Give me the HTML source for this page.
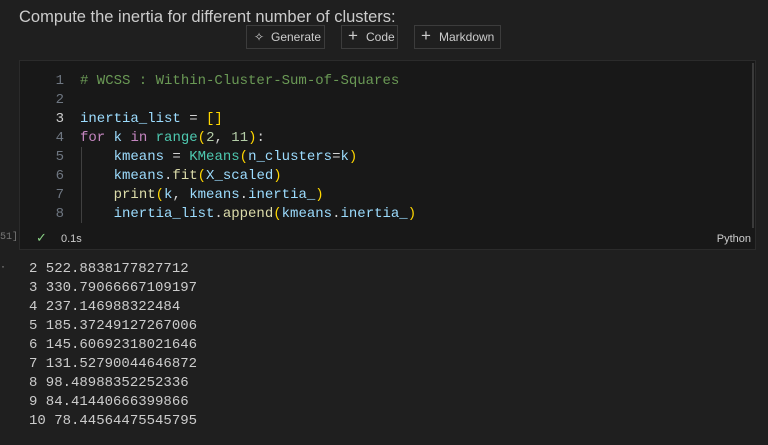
<!DOCTYPE html>
<html><head><meta charset="utf-8"><style>
html,body{margin:0;padding:0;background:#1f1f1f;width:768px;height:445px;overflow:hidden;position:relative;font-family:"Liberation Sans",sans-serif}
.title{position:absolute;left:19px;top:8px;font-size:16.5px;color:#cccccc;white-space:nowrap}
.btn{position:absolute;top:25px;height:22px;border:1px solid #3c3c3c;color:#cccccc;font-size:12px;line-height:22px;box-sizing:content-box;background:#1f1f1f;white-space:nowrap}
.cell{position:absolute;left:19px;top:60px;width:735px;height:188px;background:#181818;border:1px solid #2b2b2b}
.mono{font-family:"Liberation Mono",monospace;font-size:14px}
.ln{position:absolute;width:44px;text-align:right;color:#6e7681}
.tx{position:absolute;left:60px;white-space:pre;color:#9cdcfe}
.c{color:#6a9955}.k{color:#c586c0}.t{color:#4ec9b0}.f{color:#dcdcaa}.n{color:#b5cea8}.y{color:#ffd700}.p{color:#da70d6}.w{color:#d4d4d4}
.out{position:absolute;left:29px;top:260px;color:#cccccc;white-space:pre;line-height:19px}
</style></head><body>
<div class="title">Compute the inertia for different number of clusters:</div>
<div class="btn" style="left:246px;width:77px"><span style="position:absolute;left:7px;top:0;font-size:12px">✧</span><span style="position:absolute;left:24px">Generate</span></div>
<div class="btn" style="left:341px;width:55px"><span style="position:absolute;left:6px;font-size:17px;top:-1px">+</span><span style="position:absolute;left:24px">Code</span></div>
<div class="btn" style="left:414px;width:85px"><span style="position:absolute;left:6px;font-size:17px;top:-1px">+</span><span style="position:absolute;left:24px">Markdown</span></div>
<div class="cell mono">
<div style="position:absolute;left:61px;top:86px;width:1px;height:76px;background:#404040"></div>
<div style="position:absolute;right:1px;top:2px;width:2px;height:165px;background:#3a3a3a"></div>
<div class="ln" style="top:12px">1</div><div class="tx" style="top:12px"><span class="c"># WCSS : Within-Cluster-Sum-of-Squares</span></div>
<div class="ln" style="top:31px">2</div>
<div class="ln" style="top:50px;color:#cccccc">3</div><div class="tx" style="top:50px">inertia_list <span class="w">=</span> <span class="y">[]</span></div>
<div class="ln" style="top:69px">4</div><div class="tx" style="top:69px"><span class="k">for</span> k <span class="k">in</span> <span class="t">range</span><span class="y">(</span><span class="n">2</span><span class="w">, </span><span class="n">11</span><span class="y">)</span><span class="w">:</span></div>
<div class="ln" style="top:88px">5</div><div class="tx" style="top:88px">    kmeans <span class="w">=</span> <span class="t">KMeans</span><span class="y">(</span>n_clusters<span class="w">=</span>k<span class="y">)</span></div>
<div class="ln" style="top:107px">6</div><div class="tx" style="top:107px">    kmeans<span class="w">.</span><span class="f">fit</span><span class="y">(</span>X_scaled<span class="y">)</span></div>
<div class="ln" style="top:126px">7</div><div class="tx" style="top:126px">    <span class="f">print</span><span class="y">(</span>k<span class="w">, </span>kmeans<span class="w">.</span>inertia_<span class="y">)</span></div>
<div class="ln" style="top:145px">8</div><div class="tx" style="top:145px">    inertia_list<span class="w">.</span><span class="f">append</span><span class="y">(</span>kmeans<span class="w">.</span>inertia_<span class="y">)</span></div>
<div style="position:absolute;left:16px;top:170px;color:#89d185;font-family:'DejaVu Sans',sans-serif;font-size:13px">✓</div>
<div style="position:absolute;left:41px;top:172px;color:#cccccc;font-family:'Liberation Sans',sans-serif;font-size:11px">0.1s</div>
<div style="position:absolute;right:4px;top:172px;color:#cccccc;font-family:'Liberation Sans',sans-serif;font-size:11px">Python</div>
</div>
<div style="position:absolute;left:0;top:232px;color:#777;font-family:'Liberation Mono',monospace;font-size:10px">51]</div>
<div style="position:absolute;left:1px;top:259px;color:#9a9a9a;font-size:12px">·</div>
<div class="out mono">2 522.8838177827712
3 330.79066667109197
4 237.146988322484
5 185.37249127267006
6 145.60692318021646
7 131.52790044646872
8 98.48988352252336
9 84.41440666399866
10 78.44564475545795</div>
</body></html>
